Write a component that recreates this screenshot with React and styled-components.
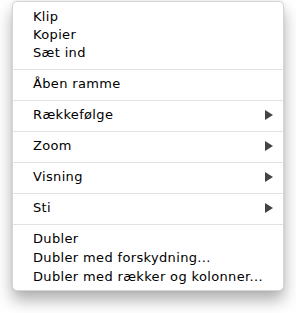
import React from 'react';
import styled, { createGlobalStyle } from 'styled-components';

const GlobalStyle = createGlobalStyle`
  html, body {
    margin: 0;
    padding: 0;
    background: #ffffff;
  }
  body {
    font-family: 'DejaVu Sans', 'Liberation Sans', sans-serif;
  }
`;

const Page = styled.div`
  width: 296px;
  height: 313px;
  padding: 1px 0 0 12px;
  box-sizing: border-box;
`;

const Menu = styled.div`
  width: 272px;
  box-sizing: border-box;
  background: #ffffff;
  border: 1px solid #d6d6d6;
  border-radius: 5px;
  box-shadow: 0 9px 16px rgba(0, 0, 0, 0.32), 0 0 3px rgba(0, 0, 0, 0.08);
  display: flex;
  flex-direction: column;
  overflow: hidden;
`;

const Group = styled.div`
  display: flex;
  flex-direction: column;
  padding: ${p => p.pad || '0'};
  & + & {
    border-top: 1px solid #e2e2e2;
  }
`;

const Item = styled.div`
  display: flex;
  align-items: center;
  justify-content: space-between;
  box-sizing: border-box;
  height: ${p => p.h || 18}px;
  padding: 0 10px ${p => p.lift || 0}px 20px;
  font-size: 13px;
  letter-spacing: 0.35px;
  color: #000000;
  white-space: nowrap;
`;

const Arrow = styled.span`
  width: 0;
  height: 0;
  border-top: 5px solid transparent;
  border-bottom: 5px solid transparent;
  border-left: 8px solid #444444;
`;

const Sub = ({ label }) => (
  <Group>
    <Item h={30} lift={3}>
      {label}
      <Arrow />
    </Item>
  </Group>
);

export default function App() {
  return (
    <Page>
      <GlobalStyle />
      <Menu>
        <Group pad="5px 0 8px">
          <Item>Klip</Item>
          <Item>Kopier</Item>
          <Item>Sæt ind</Item>
        </Group>
        <Group>
          <Item h={30} lift={3}>Åben ramme</Item>
        </Group>
        <Sub label="Rækkefølge" />
        <Sub label="Zoom" />
        <Sub label="Visning" />
        <Sub label="Sti" />
        <Group pad="4px 0 4px">
          <Item h={19}>Dubler</Item>
          <Item h={19}>Dubler med forskydning...</Item>
          <Item h={19}>Dubler med rækker og kolonner...</Item>
        </Group>
      </Menu>
    </Page>
  );
}
